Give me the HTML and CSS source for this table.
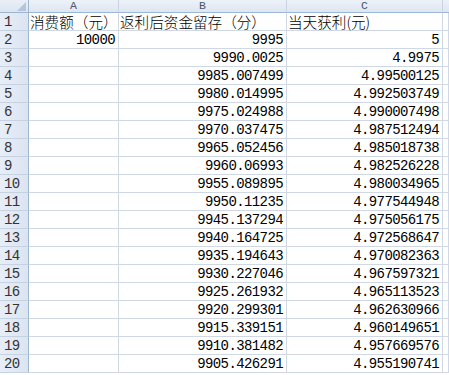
FILE: index.html
```html
<!DOCTYPE html>
<html lang="zh">
<head>
<meta charset="utf-8">
<title>Sheet</title>
<link rel="stylesheet" href="styles.css">
</head>
<body>
<div class="sheet">
  <div class="corner"><span class="tri"></span></div>
  <div class="colh">A</div>
  <div class="colh">B</div>
  <div class="colh">C</div>
  <div class="colh last"></div>

  <div class="rowh">1</div>
  <div class="cell txt">消费额（元）</div>
  <div class="cell txt">返利后资金留存（分）</div>
  <div class="cell txt">当天获利(元)</div>
  <div class="cell"></div>

  <div class="rowh">2</div>
  <div class="cell num">10000</div>
  <div class="cell num">9995</div>
  <div class="cell num">5</div>
  <div class="cell"></div>

  <div class="rowh">3</div>
  <div class="cell"></div>
  <div class="cell num">9990.0025</div>
  <div class="cell num">4.9975</div>
  <div class="cell"></div>

  <div class="rowh">4</div>
  <div class="cell"></div>
  <div class="cell num">9985.007499</div>
  <div class="cell num">4.99500125</div>
  <div class="cell"></div>

  <div class="rowh">5</div>
  <div class="cell"></div>
  <div class="cell num">9980.014995</div>
  <div class="cell num">4.992503749</div>
  <div class="cell"></div>

  <div class="rowh">6</div>
  <div class="cell"></div>
  <div class="cell num">9975.024988</div>
  <div class="cell num">4.990007498</div>
  <div class="cell"></div>

  <div class="rowh">7</div>
  <div class="cell"></div>
  <div class="cell num">9970.037475</div>
  <div class="cell num">4.987512494</div>
  <div class="cell"></div>

  <div class="rowh">8</div>
  <div class="cell"></div>
  <div class="cell num">9965.052456</div>
  <div class="cell num">4.985018738</div>
  <div class="cell"></div>

  <div class="rowh">9</div>
  <div class="cell"></div>
  <div class="cell num">9960.06993</div>
  <div class="cell num">4.982526228</div>
  <div class="cell"></div>

  <div class="rowh">10</div>
  <div class="cell"></div>
  <div class="cell num">9955.089895</div>
  <div class="cell num">4.980034965</div>
  <div class="cell"></div>

  <div class="rowh">11</div>
  <div class="cell"></div>
  <div class="cell num">9950.11235</div>
  <div class="cell num">4.977544948</div>
  <div class="cell"></div>

  <div class="rowh">12</div>
  <div class="cell"></div>
  <div class="cell num">9945.137294</div>
  <div class="cell num">4.975056175</div>
  <div class="cell"></div>

  <div class="rowh">13</div>
  <div class="cell"></div>
  <div class="cell num">9940.164725</div>
  <div class="cell num">4.972568647</div>
  <div class="cell"></div>

  <div class="rowh">14</div>
  <div class="cell"></div>
  <div class="cell num">9935.194643</div>
  <div class="cell num">4.970082363</div>
  <div class="cell"></div>

  <div class="rowh">15</div>
  <div class="cell"></div>
  <div class="cell num">9930.227046</div>
  <div class="cell num">4.967597321</div>
  <div class="cell"></div>

  <div class="rowh">16</div>
  <div class="cell"></div>
  <div class="cell num">9925.261932</div>
  <div class="cell num">4.965113523</div>
  <div class="cell"></div>

  <div class="rowh">17</div>
  <div class="cell"></div>
  <div class="cell num">9920.299301</div>
  <div class="cell num">4.962630966</div>
  <div class="cell"></div>

  <div class="rowh">18</div>
  <div class="cell"></div>
  <div class="cell num">9915.339151</div>
  <div class="cell num">4.960149651</div>
  <div class="cell"></div>

  <div class="rowh">19</div>
  <div class="cell"></div>
  <div class="cell num">9910.381482</div>
  <div class="cell num">4.957669576</div>
  <div class="cell"></div>

  <div class="rowh">20</div>
  <div class="cell"></div>
  <div class="cell num">9905.426291</div>
  <div class="cell num">4.955190741</div>
  <div class="cell"></div>
</div>
</body>
</html>
```
FILE: styles.css
```css
* { box-sizing: border-box; }
html, body {
  margin: 0;
  padding: 0;
  background: #ffffff;
  overflow: hidden;
}
.sheet {
  display: grid;
  grid-template-columns: 29px 90px 168px 156px 1fr;
  grid-template-rows: 13px repeat(20, 18px);
  width: 449px;
  font-family: "Liberation Mono", "Noto Sans CJK SC", monospace;
  color: #000;
}
.corner {
  position: relative;
  background: linear-gradient(#e9eff8, #dbe5f2);
  border-right: 1px solid #9eb6ce;
  border-bottom: 1px solid #9eb6ce;
}
.tri {
  position: absolute;
  right: 2px;
  bottom: 1px;
  width: 0;
  height: 0;
  border-left: 9px solid transparent;
  border-bottom: 9px solid #b4c5db;
}
.colh {
  background: linear-gradient(#edf2f9, #dde6f2);
  border-right: 1px solid #c8d4e3;
  border-bottom: 1px solid #9eb6ce;
  font-family: "Liberation Mono", monospace;
  font-size: 11.5px;
  line-height: 12px;
  text-align: center;
  color: #4a5566;
}
.colh.last { border-right: none; }
.rowh {
  background: linear-gradient(90deg, #e8eef7, #dbe4f1);
  border-right: 1px solid #9eb6ce;
  border-bottom: 1px solid #c5d2e2;
  font-size: 14px;
  letter-spacing: -0.6px;
  line-height: 17px;
  padding-top: 1px;
  padding-left: 4px;
  color: #333;
}
.cell {
  border-right: 1px solid #d0d7e5;
  border-bottom: 1px solid #d0d7e5;
  white-space: nowrap;
  overflow: hidden;
}
.num {
  font-size: 14px;
  letter-spacing: -0.6px;
  line-height: 17px;
  padding-top: 1px;
  text-align: right;
  padding-right: 3px;
}
.txt {
  font-family: "Noto Sans CJK SC", sans-serif;
  font-weight: 300;
  font-size: 14.6px;
  line-height: 17px;
  padding-left: 1px;
  overflow: visible;
}
```
